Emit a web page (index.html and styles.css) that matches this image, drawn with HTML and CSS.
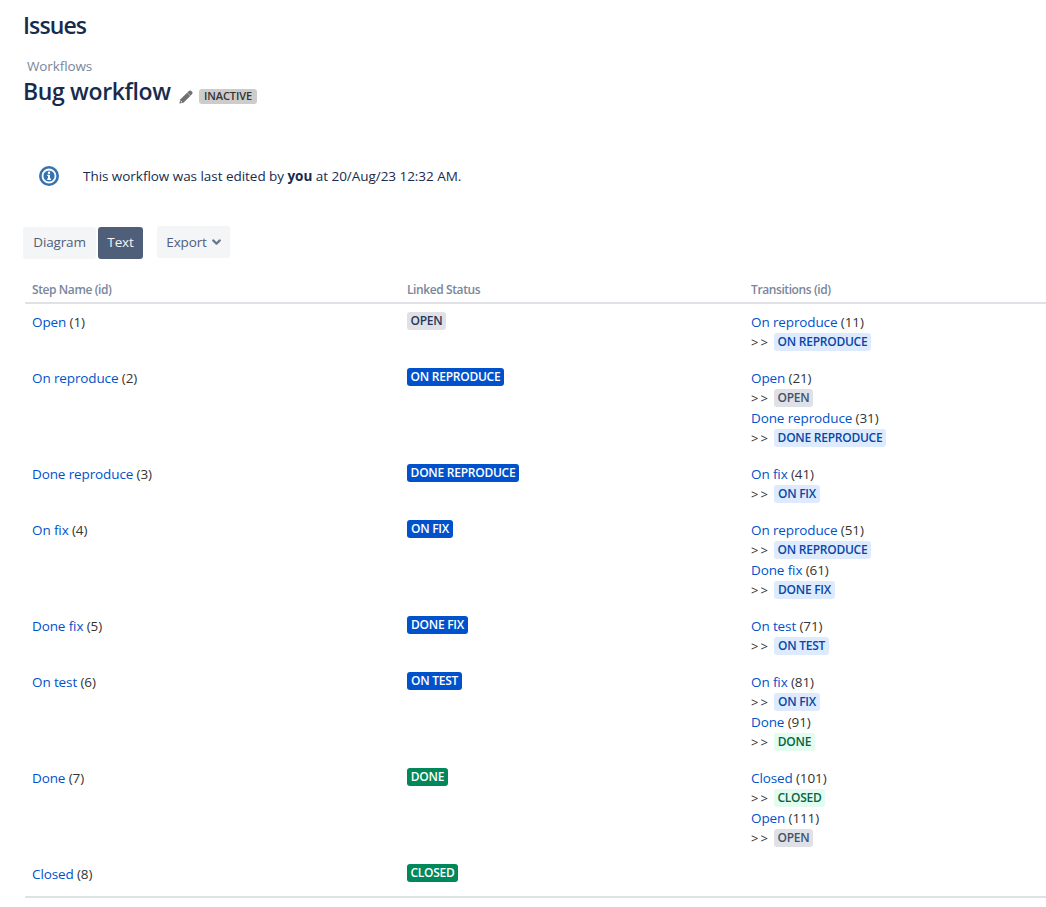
FILE: index.html
```html
<!DOCTYPE html>
<html lang="en">
<head>
<meta charset="utf-8">
<title>Bug workflow</title>
<link rel="stylesheet" href="styles.css">
</head>
<body>
<header class="page-header">
  <h1 class="title">Issues</h1>
  <a class="breadcrumb">Workflows</a>
  <div class="workflow-head">
    <h2 class="title workflow-name">Bug workflow</h2>
    <svg class="pencil" width="14" height="14" viewBox="0 0 14 14"><path d="M.4 13.6 1.2 9.6 8.1 2.7 11.3 5.9 4.4 12.8Z" fill="#707070"/><path d="M8.3 2.5 10.2.7Q11.2.1 12 .8L13.3 2.1Q13.9 2.9 13.3 3.8L11.5 5.7Z" fill="#707070"/><path d="M1.6 11 3 12.4" stroke="#fff" stroke-width="1"/></svg>
    <span class="inactive">INACTIVE</span>
  </div>
</header>
<div class="message">
  <svg width="20" height="20" viewBox="0 0 20 20"><circle cx="10" cy="10" r="10" fill="#3572b0"/><circle cx="10" cy="10" r="6.5" fill="none" stroke="#fff" stroke-width="1.8"/><circle cx="10" cy="6.8" r="1.2" fill="#fff"/><path d="M8.2 8.7H11V12.6H12V14H8.2V12.6H9V10H8.2Z" fill="#fff"/></svg>
  <p class="message-text">This workflow was last edited by <strong>you</strong> at 20/Aug/23 12:32 AM.</p>
</div>
<div class="toolbar">
  <button class="btn diagram">Diagram</button>
  <button class="btn active">Text</button>
  <button class="btn export"><span>Export</span><svg width="9" height="7" viewBox="0 0 9 7"><path d="M1.2 1.4 4.5 4.6 7.8 1.4" fill="none" stroke="#6b778c" stroke-width="2.2" stroke-linecap="round" stroke-linejoin="round"/></svg></button>
</div>
<main class="steps">
  <div class="row head"><div>Step Name (id)</div><div>Linked Status</div><div>Transitions (id)</div></div>
  <div class="row">
    <div><p class="line"><a>Open</a> (1)</p></div>
    <div><span class="badge open w-open">OPEN</span></div>
    <div><p class="line"><a>On reproduce</a> (11)</p><p class="line to"><i>&gt;&gt;</i><span class="badge soft-blue w-onrep">ON REPRODUCE</span></p></div>
  </div>
  <div class="row">
    <div><p class="line"><a>On reproduce</a> (2)</p></div>
    <div><span class="badge blue w-onrep">ON REPRODUCE</span></div>
    <div><p class="line"><a>Open</a> (21)</p><p class="line to"><i>&gt;&gt;</i><span class="badge soft-grey w-open">OPEN</span></p>
      <p class="line"><a>Done reproduce</a> (31)</p><p class="line to"><i>&gt;&gt;</i><span class="badge soft-blue w-donerep">DONE REPRODUCE</span></p></div>
  </div>
  <div class="row">
    <div><p class="line"><a>Done reproduce</a> (3)</p></div>
    <div><span class="badge blue w-donerep">DONE REPRODUCE</span></div>
    <div><p class="line"><a>On fix</a> (41)</p><p class="line to"><i>&gt;&gt;</i><span class="badge soft-blue w-onfix">ON FIX</span></p></div>
  </div>
  <div class="row">
    <div><p class="line"><a>On fix</a> (4)</p></div>
    <div><span class="badge blue w-onfix">ON FIX</span></div>
    <div><p class="line"><a>On reproduce</a> (51)</p><p class="line to"><i>&gt;&gt;</i><span class="badge soft-blue w-onrep">ON REPRODUCE</span></p>
      <p class="line"><a>Done fix</a> (61)</p><p class="line to"><i>&gt;&gt;</i><span class="badge soft-blue w-donefix">DONE FIX</span></p></div>
  </div>
  <div class="row">
    <div><p class="line"><a>Done fix</a> (5)</p></div>
    <div><span class="badge blue w-donefix">DONE FIX</span></div>
    <div><p class="line"><a>On test</a> (71)</p><p class="line to"><i>&gt;&gt;</i><span class="badge soft-blue w-ontest">ON TEST</span></p></div>
  </div>
  <div class="row">
    <div><p class="line"><a>On test</a> (6)</p></div>
    <div><span class="badge blue w-ontest">ON TEST</span></div>
    <div><p class="line"><a>On fix</a> (81)</p><p class="line to"><i>&gt;&gt;</i><span class="badge soft-blue w-onfix">ON FIX</span></p>
      <p class="line"><a>Done</a> (91)</p><p class="line to"><i>&gt;&gt;</i><span class="badge soft-green w-done">DONE</span></p></div>
  </div>
  <div class="row">
    <div><p class="line"><a>Done</a> (7)</p></div>
    <div><span class="badge green w-done">DONE</span></div>
    <div><p class="line"><a>Closed</a> (101)</p><p class="line to"><i>&gt;&gt;</i><span class="badge soft-green w-closed">CLOSED</span></p>
      <p class="line"><a>Open</a> (111)</p><p class="line to"><i>&gt;&gt;</i><span class="badge soft-grey w-open">OPEN</span></p></div>
  </div>
  <div class="row last">
    <div><p class="line"><a>Closed</a> (8)</p></div>
    <div><span class="badge green w-closed">CLOSED</span></div>
    <div></div>
  </div>
</main>
</body>
</html>
```
FILE: styles.css
```css
* { box-sizing: border-box; }
body { margin: 0; background: #fff; color: #172b4d; font: 13.5px/20px "Open Sans", "Noto Sans", sans-serif; overflow: hidden; }
h1, h2, p { margin: 0; }
.page-header { display: flex; flex-direction: column; align-items: flex-start; padding: 11px 0 0 23px; }
.title { font-size: 23px; line-height: 28px; font-weight: 600; letter-spacing: -0.9px; white-space: nowrap; }
.breadcrumb { margin: 17px 0 0 4px; color: #7a869a; letter-spacing: -0.12px; }
.workflow-head { display: flex; align-items: flex-start; margin-top: 1px; height: 30px; }
.workflow-name { width: 156px; letter-spacing: -0.35px; }
.pencil { margin-top: 13px; }
.inactive { margin: 12px 0 0 6px; width: 58px; height: 15px; border-radius: 3px; background: #ccc; color: #333; font-size: 11px; line-height: 14px; font-weight: 600; text-align: center; letter-spacing: -0.1px; }
.message { display: flex; align-items: center; gap: 24px; height: 20px; margin: 59px 0 0 39px; }
.message-text { letter-spacing: -0.04px; white-space: nowrap; }
.toolbar { display: flex; margin: 40px 0 0 23px; height: 33px; }
.btn { border: 0; padding: 0 0 2px; margin-top: 1px; height: 32px; border-radius: 3px; background: #f4f5f7; color: #505f79; font: inherit; line-height: 30px; letter-spacing: -0.15px; }
.diagram { width: 73px; }
.active { width: 45px; margin-left: 2px; background: #505f79; color: #f4f5f7; }
.export { display: flex; align-items: center; justify-content: center; gap: 5px; width: 73px; margin: 0 0 0 14px; padding: 0; height: 32px; line-height: 32px; }
.steps { margin: 21px 0 0 25px; border-bottom: 2px solid #dfe1e6; }
.row { display: grid; grid-template-columns: 375px 344px 1fr; padding: 8px 0 8px 7px; }
.head { height: 24px; padding-top: 0; border-bottom: 2px solid #dfe1e6; color: #7a869a; font-size: 12px; font-weight: 600; line-height: 20px; letter-spacing: -0.4px; }
.last { padding-bottom: 12px; }
.line { height: 20px; white-space: nowrap; color: #333; letter-spacing: -0.12px; }
.line a { color: #0052cc; }
.to { display: flex; align-items: center; }
.to i { width: 23px; font-style: normal; font-size: 13px; letter-spacing: 2px; }
.badge { display: block; height: 18px; border-radius: 3px; font-size: 12px; line-height: 18px; font-weight: 600; text-align: center; letter-spacing: -0.25px; white-space: nowrap; }
.blue { background: #0052cc; color: #fff; }
.green { background: #00875a; color: #fff; }
.open { background: #dfe1e6; color: #253858; }
.soft-grey { background: #dfe1e6; color: #42526e; }
.soft-blue { background: #deebff; color: #0747a6; }
.soft-green { background: #e3fcef; color: #006644; }
.w-open { width: 39px; }
.w-onrep { width: 97px; }
.w-donerep { width: 112px; }
.w-onfix { width: 46px; }
.w-donefix { width: 61px; }
.w-ontest { width: 55px; }
.w-done { width: 41px; }
.w-closed { width: 51px; }
```
